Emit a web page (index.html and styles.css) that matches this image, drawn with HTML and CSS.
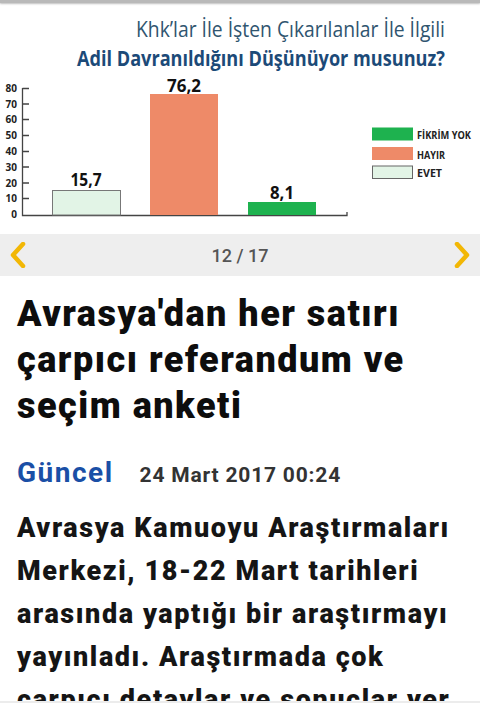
FILE: index.html
```html
<!DOCTYPE html>
<html lang="tr">
<head>
<meta charset="utf-8">
<link rel="stylesheet" href="styles.css">
</head>
<body>
<div class="topbar"></div>
<div class="chart">
  <svg class="chart-svg" width="480" height="231" viewBox="0 4 480 231" xmlns="http://www.w3.org/2000/svg">
    <text class="t1" x="445" y="38" text-anchor="end" textLength="309" lengthAdjust="spacingAndGlyphs">Khk’lar İle İşten Çıkarılanlar İle İlgili</text>
    <text class="t2" x="445" y="67" text-anchor="end" textLength="368" lengthAdjust="spacingAndGlyphs">Adil Davranıldığını Düşünüyor musunuz?</text>
    <g class="ylab" text-anchor="end">
      <text x="17" y="93">80</text>
      <text x="17" y="108.5">70</text>
      <text x="17" y="124">60</text>
      <text x="17" y="140">50</text>
      <text x="17" y="156">40</text>
      <text x="17" y="171.5">30</text>
      <text x="17" y="187.5">20</text>
      <text x="17" y="203">10</text>
      <text x="17" y="219">0</text>
    </g>
    <g stroke="#444" stroke-width="1.3" fill="none">
      <path d="M22.5 89 V216.5 H347 V213"/>
      <path d="M22.5 89.5 H29 M22.5 105 H29 M22.5 120.5 H29 M22.5 136.5 H29 M22.5 152.5 H29 M22.5 168 H29 M22.5 184 H29 M22.5 199.5 H29"/>
    </g>
    <rect x="52.5" y="191.5" width="68" height="24.5" fill="#e2f4e6" stroke="#777" stroke-width="1"/>
    <rect x="150" y="95" width="68" height="121" fill="#ee8a68"/>
    <rect x="248" y="203" width="68" height="13" fill="#1eb24f"/>
    <g class="val" text-anchor="middle">
      <text x="86" y="187" textLength="31" lengthAdjust="spacingAndGlyphs">15,7</text>
      <text x="184" y="93" textLength="34" lengthAdjust="spacingAndGlyphs">76,2</text>
      <text x="282" y="200" textLength="24" lengthAdjust="spacingAndGlyphs">8,1</text>
    </g>
    <rect x="372" y="128.5" width="41" height="13" fill="#1eb24f"/>
    <rect x="372" y="148" width="41" height="13" fill="#ee8a68"/>
    <rect x="372.5" y="167" width="40" height="12.5" fill="#e2f4e6" stroke="#666" stroke-width="1"/>
    <g class="leg">
      <text x="417" y="140" textLength="54" lengthAdjust="spacingAndGlyphs">FİKRİM YOK</text>
      <text x="417" y="159.5" textLength="28" lengthAdjust="spacingAndGlyphs">HAYIR</text>
      <text x="417" y="178" textLength="25" lengthAdjust="spacingAndGlyphs">EVET</text>
    </g>
  </svg>
</div>
<div class="pager">
  <svg class="chev" width="20" height="26" viewBox="0 0 20 26" xmlns="http://www.w3.org/2000/svg"><path d="M15 2 L5 13 L15 24" fill="none" stroke="#f2b705" stroke-width="4.5" stroke-linecap="round" stroke-linejoin="round"/></svg>
  <span class="count">12 / 17</span>
  <svg class="chev" width="20" height="26" viewBox="0 0 20 26" xmlns="http://www.w3.org/2000/svg"><path d="M5 2 L15 13 L5 24" fill="none" stroke="#f2b705" stroke-width="4.5" stroke-linecap="round" stroke-linejoin="round"/></svg>
</div>
<article class="article">
  <h1 class="headline">Avrasya'dan her satırı çarpıcı referandum ve seçim anketi</h1>
  <div class="meta">
    <span class="cat">Güncel</span>
    <span class="date">24 Mart 2017 00:24</span>
  </div>
  <p class="lead">Avrasya Kamuoyu Araştırmaları Merkezi, 18-22 Mart tarihleri arasında yaptığı bir araştırmayı yayınladı. Araştırmada çok çarpıcı detaylar ve sonuçlar yer aldı.</p>
</article>
<div class="bottombar"></div>
</body>
</html>
```
FILE: styles.css
```css
html, body {
  margin: 0;
  padding: 0;
  background: #ffffff;
  overflow: hidden;
}
body {
  width: 480px;
  height: 703px;
  font-family: Roboto, "Noto Sans", sans-serif;
}
.topbar {
  height: 3px;
  background: #b9b9b9;
  box-shadow: 0 1px 2px rgba(0,0,0,0.25);
  position: relative;
  z-index: 2;
}
.chart {
  height: 231px;
}
.chart-svg {
  display: block;
}
.t1 {
  font-family: "Open Sans", sans-serif;
  font-size: 22px;
  fill: #30556f;
}
.t2 {
  font-family: "Open Sans", sans-serif;
  font-weight: 700;
  font-size: 22px;
  fill: #1c4a78;
}
.ylab text {
  font-family: "Open Sans", sans-serif;
  font-weight: 700;
  font-size: 10px;
  fill: #222;
}
.val text {
  font-family: "Open Sans", sans-serif;
  font-weight: 700;
  font-size: 17px;
  fill: #111;
}
.leg text {
  font-family: "Open Sans", sans-serif;
  font-weight: 700;
  font-size: 11px;
  fill: #222;
}
.pager {
  height: 42px;
  background: #eeeeee;
  display: flex;
  align-items: center;
  justify-content: space-between;
  padding: 0 8px;
}
.chev {
  display: block;
}
.count {
  font-size: 18px;
  font-weight: 500;
  color: #555;
}
.article {
  padding: 0 17px;
}
.headline {
  margin: 15px 0 0;
  font-size: 36px;
  line-height: 46px;
  font-weight: 900;
  letter-spacing: 1.5px;
  color: #0d0d0d;
}
.meta {
  margin-top: 27px;
  display: flex;
  align-items: baseline;
  gap: 26px;
  line-height: 34px;
}
.cat {
  font-size: 28px;
  font-weight: 700;
  letter-spacing: 1.5px;
  color: #1a4fa6;
}
.date {
  font-size: 21px;
  font-weight: 700;
  letter-spacing: 0.8px;
  color: #333;
}
.lead {
  margin: 15px 0 0;
  font-size: 27px;
  line-height: 43px;
  font-weight: 900;
  letter-spacing: 1.6px;
  color: #151515;
}
.bottombar {
  position: fixed;
  left: 0;
  right: 0;
  bottom: 0;
  height: 2px;
  background: #ececec;
}
```
